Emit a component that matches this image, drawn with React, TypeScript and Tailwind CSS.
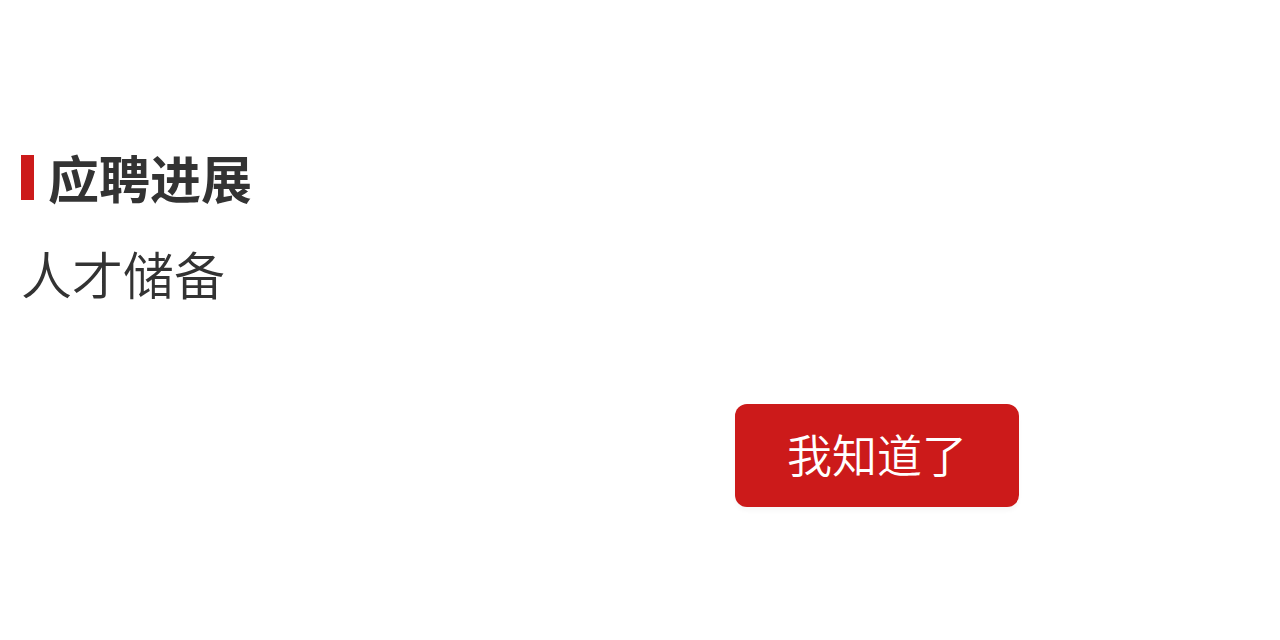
export default function App() {
  return (
    <main
      className="min-h-screen bg-white px-[21px] pt-[155px] text-[#333333]"
      style={{ fontFamily: '"Noto Sans CJK SC", sans-serif' }}
    >
      <section>
        <h2 className="flex items-center gap-[14px] text-[51px] leading-[45px] font-bold">
          <span className="h-[45px] w-[13px] bg-[#cc1a1a]" />
          应聘进展
        </h2>
        <p className="mt-[51px] text-[51px] leading-[45px] font-[350]">人才储备</p>
      </section>
      <div className="mt-[108px] flex justify-end pr-[240px]">
        <button
          type="button"
          className="rounded-xl bg-[#cc1a1a] px-[52px] pt-[24px] pb-[28px] text-[45px] leading-[51px] font-[350] text-white shadow-[0_4px_4px_rgba(0,0,0,0.03)]"
        >
          我知道了
        </button>
      </div>
    </main>
  );
}
